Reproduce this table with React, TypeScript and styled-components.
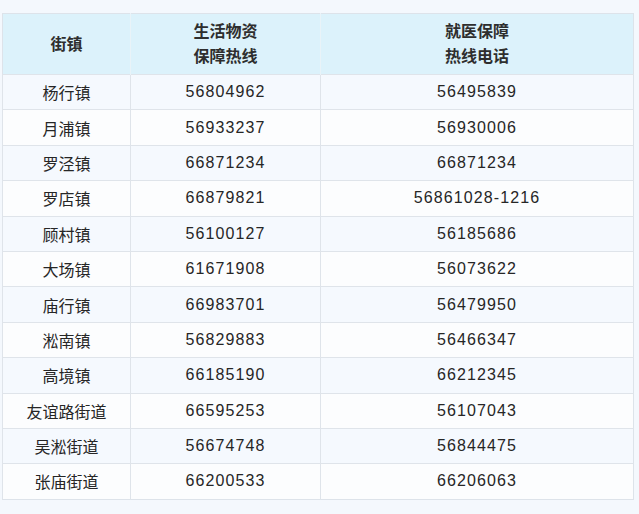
import styled, { createGlobalStyle } from 'styled-components'

const GlobalStyle = createGlobalStyle`
  html, body {
    margin: 0;
    padding: 0;
    background: #f4f8fd;
  }
  body {
    font-family: "Liberation Sans", "Noto Sans CJK SC", sans-serif;
    color: #2b2b2b;
  }
`

const Page = styled.div`
  padding: 13px 9px 14px 2px;
`

const Table = styled.table`
  width: 628px;
  border-collapse: collapse;
  table-layout: fixed;
  border: 1px solid #dde3ea;
`

const HeadCell = styled.th<{ $w: number }>`
  width: ${({ $w }) => $w}px;
  height: 60px;
  padding: 0;
  background: #dcf2fb;
  border-left: 1px solid #e9f3f8;
  color: #2e2e2e;
  font-size: 16px;
  font-weight: 700;
  line-height: 25px;
  text-align: center;
  &:first-child {
    border-left: none;
  }
`

const Row = styled.tr<{ $odd: boolean }>`
  height: 35.4px;
  background: ${({ $odd }) => ($odd ? '#f5f9fe' : '#fcfdfe')};
  border-top: 1px solid #dfe4ea;
`

const Cell = styled.td<{ $num?: boolean }>`
  padding: 0;
  border-left: 1px solid #dfe4ea;
  text-align: center;
  font-size: 16px;
  letter-spacing: ${({ $num }) => ($num ? '1.1px' : '0')};
  color: #262626;
`

const rows = [
  ['杨行镇', '56804962', '56495839'],
  ['月浦镇', '56933237', '56930006'],
  ['罗泾镇', '66871234', '66871234'],
  ['罗店镇', '66879821', '56861028-1216'],
  ['顾村镇', '56100127', '56185686'],
  ['大场镇', '61671908', '56073622'],
  ['庙行镇', '66983701', '56479950'],
  ['淞南镇', '56829883', '56466347'],
  ['高境镇', '66185190', '66212345'],
  ['友谊路街道', '66595253', '56107043'],
  ['吴淞街道', '56674748', '56844475'],
  ['张庙街道', '66200533', '66206063'],
]

export default function App() {
  return (
    <>
      <GlobalStyle />
      <Page>
        <Table>
          <thead>
            <tr>
              <HeadCell $w={127}>街镇</HeadCell>
              <HeadCell $w={189}>
                生活物资
                <br />
                保障热线
              </HeadCell>
              <HeadCell $w={312}>
                就医保障
                <br />
                热线电话
              </HeadCell>
            </tr>
          </thead>
          <tbody>
            {rows.map((r, i) => (
              <Row key={r[0]} $odd={i % 2 === 0}>
                <Cell>{r[0]}</Cell>
                <Cell $num>{r[1]}</Cell>
                <Cell $num>{r[2]}</Cell>
              </Row>
            ))}
          </tbody>
        </Table>
      </Page>
    </>
  )
}
